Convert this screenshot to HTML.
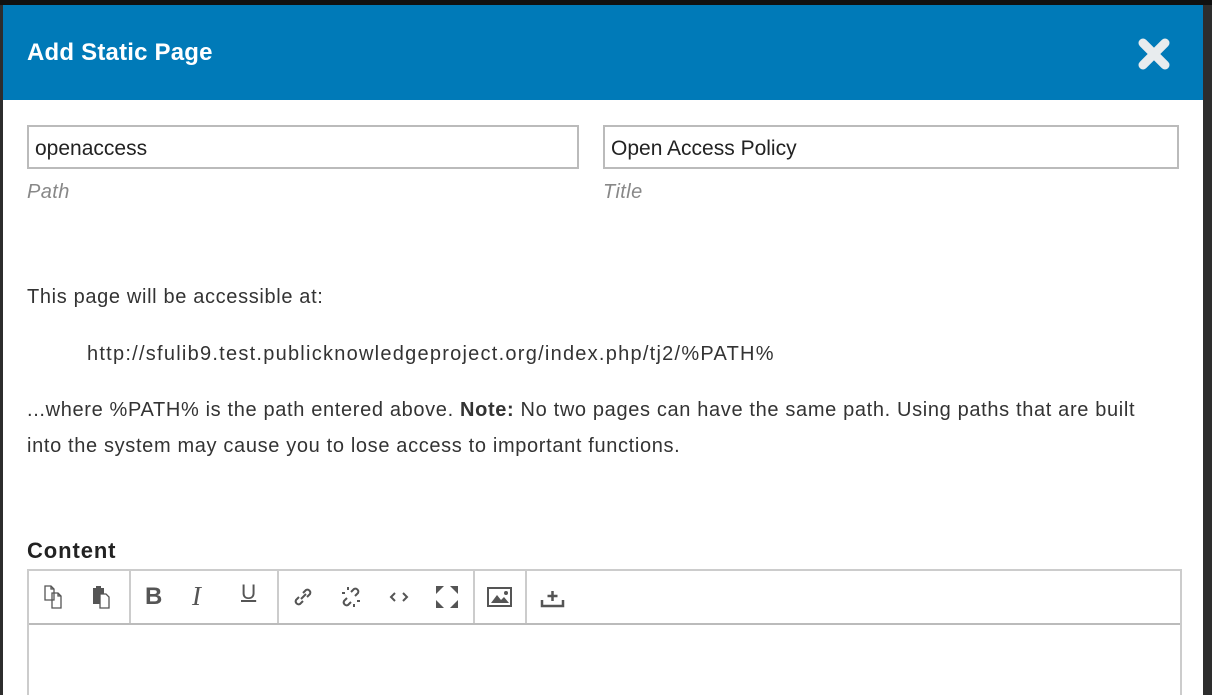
<!DOCTYPE html>
<html><head><style>
html,body{margin:0;width:1212px;height:695px;overflow:hidden}
body{background:#2d2d2d;font-family:"Liberation Sans","DejaVu Sans",sans-serif;position:relative}
.top{position:absolute;left:0;top:0;width:1212px;height:5px;background:#111}
.modal{position:absolute;left:3px;top:5px;width:1200px;height:690px;background:#fff;overflow:hidden}
.hd{height:95px;background:#007ab8;position:relative}
.hd h1{margin:0;position:absolute;left:24px;top:34px;color:#fff;font-size:24px;font-weight:bold;letter-spacing:0.2px}
.x{position:absolute;left:1133px;top:31px}
.inp{position:absolute;height:44px;border:2px solid #bbb;box-sizing:border-box;font-size:21px;color:#222;padding:10px 0 0 6px}
.lbl{position:absolute;font-style:italic;color:#888;font-size:20px;letter-spacing:0.4px}
.t{position:absolute;color:#333;font-size:20px;line-height:36px;letter-spacing:0.65px}
.ed{position:absolute;left:24px;top:564px;width:1155px;height:140px;border:2px solid #ccc;box-sizing:border-box}
.tb{height:52px;border-bottom:2px solid #bbb;position:relative}
.sep{position:absolute;top:0;width:2px;height:52px;background:#ccc}
.ic{position:absolute;top:14px}
</style></head><body>
<div class="top"></div>
<div class="modal">
<div class="hd"><h1>Add Static Page</h1>
<svg class="x" width="36" height="36" viewBox="0 0 36 36"><path d="M7 7L29 29M29 7L7 29" stroke="#e8ecee" stroke-width="9" stroke-linecap="round"/></svg></div>
<div class="inp" style="left:24px;top:120px;width:552px">openaccess</div>
<div class="lbl" style="left:24px;top:176px">Path</div>
<div class="inp" style="left:600px;top:120px;width:576px">Open Access Policy</div>
<div class="lbl" style="left:600px;top:176px">Title</div>
<div class="t" style="left:24px;top:274px">This page will be accessible at:</div>
<div class="t" style="left:84px;top:331px;letter-spacing:1.25px">http://sfulib9.test.publicknowledgeproject.org/index.php/tj2/%PATH%</div>
<div class="t" style="left:24px;top:387px;width:1140px">...where %PATH% is the path entered above. <b>Note:</b> No two pages can have the same path. Using paths that are built into the system may cause you to lose access to important functions.</div>
<div class="t" style="left:24px;top:528px;font-weight:bold;color:#222;font-size:22px;letter-spacing:0.9px">Content</div>
<div class="ed"><div class="tb">
<svg class="ic" style="left:14px" width="24" height="24" viewBox="0 0 24 24" fill="none" stroke="#555" stroke-width="1.3"><path d="M2 1h6l3 3v11H2z M8 1v3h3 M9 8h6l3 3v12H9z M15 8v3h3"/></svg>
<svg class="ic" style="left:62px" width="24" height="24" viewBox="0 0 24 24"><rect x="2" y="3" width="11" height="16" fill="#555"/><rect x="5" y="1" width="5" height="3" fill="#555"/><path d="M9 9h6l3 3v11H9z" fill="#fff" stroke="#555" stroke-width="1.3"/></svg>
<div class="sep" style="left:100px"></div>
<div class="ic" style="left:116px;top:12px;font-size:24px;font-weight:bold;color:#555">B</div>
<div class="ic" style="left:163px;top:10px;font-size:27px;font-style:italic;font-family:'Liberation Serif',serif;color:#555">I</div>
<div class="ic" style="left:212px;top:10px;font-size:21px;color:#555;text-decoration:underline;text-decoration-thickness:2px">U</div>
<div class="sep" style="left:248px"></div>
<svg class="ic" style="left:262px" width="24" height="24" viewBox="0 0 24 24" fill="none" stroke="#555" stroke-width="2"><path d="M10 14l5-5 M8 12l-3 3a3 3 0 004 4l3-3 M16 12l3-3a3 3 0 00-4-4l-3 3"/></svg>
<svg class="ic" style="left:310px" width="24" height="24" viewBox="0 0 24 24" fill="none" stroke="#555" stroke-width="2"><path d="M8 13l-3 3a3 3 0 004 4l3-3 M16 11l3-3a3 3 0 00-4-4l-3 3 M9 2v3M3 8h3M15 22v-3M21 16h-3"/></svg>
<svg class="ic" style="left:358px" width="24" height="24" viewBox="0 0 24 24" fill="none" stroke="#555" stroke-width="2"><path d="M8 8l-4 4 4 4M16 8l4 4-4 4"/></svg>
<svg class="ic" style="left:406px" width="24" height="24" viewBox="0 0 24 24" fill="#555"><path d="M1 1h8L1 9zM23 1h-8l8 8zM1 23h8L1 15zM23 23h-8l8-8z"/></svg>
<div class="sep" style="left:444px"></div>
<svg class="ic" style="left:458px" width="26" height="24" viewBox="0 0 26 24"><rect x="1" y="3" width="23" height="18" fill="none" stroke="#555" stroke-width="2"/><path d="M4 18l6-8 4 5 3-3 5 6z" fill="#555"/><circle cx="19" cy="8" r="2" fill="#555"/></svg>
<div class="sep" style="left:496px"></div>
<svg class="ic" style="left:511px" width="26" height="24" viewBox="0 0 26 24" fill="none" stroke="#555" stroke-width="2.5"><path d="M2 15v6h21v-6M12.5 6v10M7.5 11h10"/></svg>
</div></div>
</div>
</body></html>
